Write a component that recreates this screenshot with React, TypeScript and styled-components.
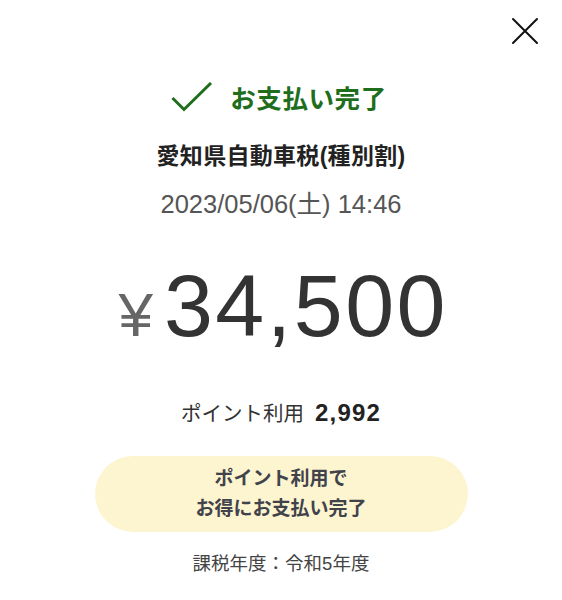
import { createGlobalStyle, styled } from 'styled-components'

const GlobalStyle = createGlobalStyle`
	html, body {
		margin: 0;
		padding: 0;
		background: #fff;
	}
	body {
		font-family: 'Liberation Sans', 'Noto Sans CJK JP', sans-serif;
		color: #333;
	}
`

const Screen = styled.div`
	width: 562px;
	height: 600px;
	display: flex;
	flex-direction: column;
	align-items: center;
	box-sizing: border-box;
`

const TopBar = styled.div`
	width: 100%;
	display: flex;
	justify-content: flex-end;
	padding: 17px 23px 0 0;
	box-sizing: border-box;
`

const CloseButton = styled.button`
	border: none;
	background: none;
	padding: 0;
	width: 28px;
	height: 28px;
	cursor: pointer;
	display: flex;
`

const Status = styled.div`
	margin-top: 33px;
	margin-left: -4px;
	display: flex;
	align-items: center;
	gap: 17px;
`

const StatusLabel = styled.span`
	font-size: 25.5px;
	font-weight: 700;
	color: #1e6e1e;
	letter-spacing: 0.6px;
`

const Title = styled.div`
	margin-top: 22px;
	font-size: 23px;
	font-weight: 700;
	color: #222;
	letter-spacing: 0.3px;
`

const DateText = styled.div`
	margin-top: 12px;
	font-size: 25.5px;
	color: #555;
`

const Amount = styled.div`
	margin-top: 42px;
	margin-left: 2px;
	display: flex;
	align-items: baseline;
	gap: 11px;
`

const Yen = styled.span`
	font-size: 62px;
	color: #666;
	line-height: 1;
`

const Value = styled.span`
	font-size: 88px;
	color: #333;
	line-height: 1;
	letter-spacing: 2.5px;
	margin-right: -2.5px;
`

const Points = styled.div`
	margin-top: 47px;
	display: flex;
	align-items: baseline;
	gap: 11px;
	font-size: 20.5px;
	color: #333;
`

const PointsValue = styled.strong`
	font-size: 24px;
	font-weight: 700;
	color: #222;
	letter-spacing: 1.2px;
`

const Pill = styled.div`
	margin-top: 29px;
	width: 373px;
	height: 76px;
	border-radius: 38px;
	background: #fdf4d0;
	display: flex;
	flex-direction: column;
	align-items: center;
	justify-content: center;
	text-align: center;
	font-size: 19px;
	font-weight: 700;
	line-height: 30px;
	color: #41434a;
`

const Footer = styled.div`
	margin-top: 17px;
	font-size: 18.5px;
	color: #444;
`

export default function App() {
	return (
		<>
			<GlobalStyle />
			<Screen>
				<TopBar>
					<CloseButton type='button' aria-label='閉じる'>
						<svg width='28' height='28' viewBox='0 0 28 28'>
							<path
								d='M2 2 L26 26 M26 2 L2 26'
								stroke='#111'
								strokeWidth='2'
								strokeLinecap='round'
							/>
						</svg>
					</CloseButton>
				</TopBar>
				<Status>
					<svg width='42' height='30' viewBox='0 0 42 30'>
						<path
							d='M1.5 16 L13 27.5 L40 1'
							fill='none'
							stroke='#1e6e1e'
							strokeWidth='3'
						/>
					</svg>
					<StatusLabel>お支払い完了</StatusLabel>
				</Status>
				<Title>愛知県自動車税(種別割)</Title>
				<DateText>2023/05/06(土) 14:46</DateText>
				<Amount>
					<Yen>¥</Yen>
					<Value>34,500</Value>
				</Amount>
				<Points>
					ポイント利用
					<PointsValue>2,992</PointsValue>
				</Points>
				<Pill>
					ポイント利用で
					<br />
					お得にお支払い完了
				</Pill>
				<Footer>課税年度：令和5年度</Footer>
			</Screen>
		</>
	)
}
